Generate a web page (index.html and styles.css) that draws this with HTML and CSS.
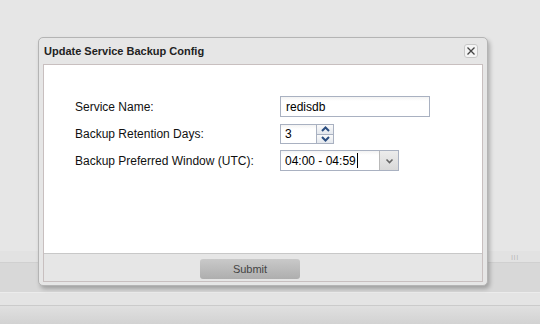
FILE: index.html
```html
<!DOCTYPE html>
<html lang="en">

<head>
    <meta charset="UTF-8">
    <title>Update Service Backup Config</title>
    <link rel="stylesheet" href="styles.css">
</head>

<body>
    <div class="backdrop">
        <div class="workspace"></div>
        <div class="pane-bar"><span class="grip">|||</span></div>
        <div class="status-area"></div>
        <div class="toolbar"></div>
        <div class="footer-area"></div>
    </div>

    <div class="dialog" role="dialog" aria-label="Update Service Backup Config">
        <div class="dialog-title">
            <span>Update Service Backup Config</span>
            <button class="close-btn" aria-label="Close">
                <svg width="8" height="8" viewBox="0 0 8 8">
                    <path d="M0.5 0.5 L7.5 7.5 M7.5 0.5 L0.5 7.5" stroke="#444" stroke-width="1.3" fill="none"/>
                </svg>
            </button>
        </div>
        <div class="dialog-inner">
            <form class="dialog-body">
                <label for="service-name">Service Name:</label>
                <input id="service-name" class="text-field" type="text" value="redisdb">

                <label for="retention">Backup Retention Days:</label>
                <div class="spinner">
                    <input id="retention" type="text" value="3">
                    <div class="spin-buttons">
                        <span class="spin-btn">
                            <svg width="9" height="6" viewBox="0 0 9 6"><path d="M1 5 L4.5 1.5 L8 5" stroke="#2b4e80" stroke-width="2" fill="none"/></svg>
                        </span>
                        <span class="spin-btn">
                            <svg width="9" height="6" viewBox="0 0 9 6"><path d="M1 1 L4.5 4.5 L8 1" stroke="#2b4e80" stroke-width="2" fill="none"/></svg>
                        </span>
                    </div>
                </div>

                <label for="window">Backup Preferred Window (UTC):</label>
                <div class="combo">
                    <div class="combo-text" id="window">04:00 - 04:59<span class="caret"></span></div>
                    <span class="combo-btn">
                        <svg width="9" height="6" viewBox="0 0 9 6"><path d="M1.5 1.5 L4.5 4.5 L7.5 1.5" stroke="#666" stroke-width="1.6" fill="none"/></svg>
                    </span>
                </div>
            </form>
            <div class="dialog-buttons">
                <button class="submit-btn" type="button">Submit</button>
            </div>
        </div>
    </div>
</body>

</html>
```

FILE: styles.css
```css
body, html {
    margin: 0;
    padding: 0;
    height: 100%;
    overflow: hidden;
    font-family: 'Liberation Sans', Arial, sans-serif;
    background: #e6e6e6;
}

/* page behind the dialog */
.backdrop {
    display: flex;
    flex-direction: column;
    height: 324px;
}

.workspace {
    height: 251px;
    background: #e6e6e6;
}

.pane-bar {
    height: 11px;
    background: #e2e2e2;
    border-bottom: 1px solid #d0d0d0;
    display: flex;
    justify-content: flex-end;
    align-items: center;
}

.grip {
    font-size: 6px;
    letter-spacing: 1px;
    color: #a8a8a8;
    margin-right: 21px;
}

.status-area {
    height: 29px;
    background: #d8d8d8;
    border-bottom: 1px solid #ececec;
}

.toolbar {
    height: 12px;
    background: #e4e4e4;
    border-bottom: 1px solid #cbcbcb;
}

.footer-area {
    flex: 1;
    background: linear-gradient(#e0e0e0, #d2d2d2);
}

/* dialog */
.dialog {
    position: absolute;
    left: 38px;
    top: 37px;
    width: 450px;
    height: 249px;
    box-sizing: border-box;
    background: #e6e6e6;
    border: 1px solid #b4b4b4;
    border-radius: 5px;
    box-shadow: 2px 3px 4px rgba(0, 0, 0, 0.25);
    padding: 0 4px 3px 4px;
    display: flex;
    flex-direction: column;
}

.dialog-title {
    height: 26px;
    display: flex;
    align-items: center;
    justify-content: space-between;
    padding-left: 1px;
    font-size: 11px;
    font-weight: bold;
    color: #222;
}

.dialog-title span {
    margin-top: -1px;
}

.close-btn {
    width: 14px;
    height: 14px;
    padding: 0;
    margin-right: 5px;
    margin-top: -1px;
    border: 1px solid #c8c8c8;
    border-radius: 3px;
    background: #f4f4f4;
    display: flex;
    align-items: center;
    justify-content: center;
}

.dialog-inner {
    flex: 1;
    border: 1px solid #c8bfbf;
    display: flex;
    flex-direction: column;
}

.dialog-body {
    height: 188px;
    box-sizing: border-box;
    background: #fff;
    padding: 31px 0 0 31px;
    margin: 0;
    display: grid;
    grid-template-columns: 205px auto;
    grid-auto-rows: min-content;
    row-gap: 6px;
    align-items: center;
    font-size: 12px;
    color: #111;
}

.dialog-body label {
    line-height: 14px;
}

.text-field {
    width: 150px;
    height: 21px;
    box-sizing: border-box;
    border: 1px solid #a9b1c1;
    padding: 0 5px;
    font-family: inherit;
    font-size: 12px;
    color: #000;
    background: linear-gradient(#f3f3f3, #fff 4px);
    margin-bottom: 1px;
}

.spinner {
    display: flex;
    width: 54px;
    height: 20px;
}

.spinner input {
    width: 36px;
    height: 20px;
    box-sizing: border-box;
    border: 1px solid #a9b1c1;
    border-right: none;
    padding: 0 4px;
    font-family: inherit;
    font-size: 12px;
    color: #000;
    background: linear-gradient(#f3f3f3, #fff 4px);
}

.spin-buttons {
    width: 18px;
    display: flex;
    flex-direction: column;
}

.spin-btn {
    flex: 1;
    border: 1px solid #a9b1c1;
    background: linear-gradient(#fafafa, #e4e8ee);
    display: flex;
    align-items: center;
    justify-content: center;
}

.spin-btn + .spin-btn {
    border-top: none;
}

.combo {
    display: flex;
    width: 119px;
    height: 21px;
    box-sizing: border-box;
    border: 1px solid #a9b1c1;
}

.combo-text {
    flex: 1;
    display: flex;
    align-items: center;
    padding-left: 4px;
    background: linear-gradient(#f3f3f3, #fff 4px);
    color: #000;
}

.caret {
    width: 1px;
    height: 15px;
    background: #000;
    margin-left: 1px;
}

.combo-btn {
    width: 18px;
    border-left: 1px solid #b9b9b9;
    background: linear-gradient(#ececec, #d9d9d9);
    display: flex;
    align-items: center;
    justify-content: center;
}

.dialog-buttons {
    flex: 1;
    border-top: 1px solid #c8c8c8;
    background: #e6e6e6;
    padding: 5px 0 0 156px;
}

.submit-btn {
    width: 100px;
    height: 20px;
    border: none;
    border-radius: 3px;
    background: linear-gradient(#c9c9c9, #aeaeae);
    font-family: inherit;
    font-size: 11px;
    color: #444;
    padding: 0;
}
```
